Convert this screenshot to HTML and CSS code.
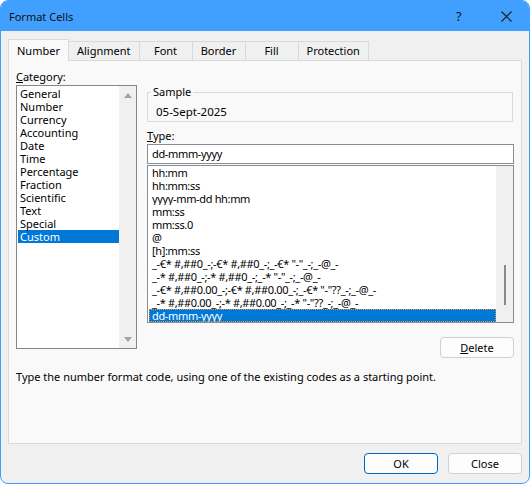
FILE: index.html
```html
<!DOCTYPE html>
<html lang="en">
<head>
<meta charset="utf-8">
<title>Format Cells</title>
<link rel="stylesheet" href="styles.css">
</head>
<body>
<div class="window">
  <div class="titlebar">
    <span class="title">Format Cells</span>
    <span class="help">?</span>
    <span class="close-x">
      <svg width="11" height="11" viewBox="0 0 11 11"><path d="M0.5 0.5L10.5 10.5M10.5 0.5L0.5 10.5" stroke="#1a1a1a" stroke-width="1.1" fill="none"/></svg>
    </span>
  </div>
  <div class="content">
    <div class="tabs">
      <div class="tab active">Number</div>
      <div class="tab">Alignment</div>
      <div class="tab">Font</div>
      <div class="tab">Border</div>
      <div class="tab">Fill</div>
      <div class="tab">Protection</div>
    </div>
    <div class="panel">
      <div class="columns">
        <div class="left">
          <div class="label"><u>C</u>ategory:</div>
          <div class="catlist">
            <div class="items">
              <div class="item">General</div>
              <div class="item">Number</div>
              <div class="item">Currency</div>
              <div class="item">Accounting</div>
              <div class="item">Date</div>
              <div class="item">Time</div>
              <div class="item">Percentage</div>
              <div class="item">Fraction</div>
              <div class="item">Scientific</div>
              <div class="item">Text</div>
              <div class="item">Special</div>
              <div class="item selected">Custom</div>
            </div>
            <div class="vscroll">
              <span class="arrow-up"></span>
              <span class="arrow-down"></span>
            </div>
          </div>
        </div>
        <div class="right">
          <fieldset class="sample">
            <legend>Sample</legend>
            <div class="sample-value">05-Sept-2025</div>
          </fieldset>
          <div class="label type-label"><u>T</u>ype:</div>
          <div class="typebox">dd-mmm-yyyy</div>
          <div class="fmtlist">
            <div class="fmt-items">
              <div class="fitem">hh:mm</div>
              <div class="fitem">hh:mm:ss</div>
              <div class="fitem">yyyy-mm-dd hh:mm</div>
              <div class="fitem">mm:ss</div>
              <div class="fitem">mm:ss.0</div>
              <div class="fitem">@</div>
              <div class="fitem">[h]:mm:ss</div>
              <div class="fitem">_-€* #,##0_-;-€* #,##0_-;_-€* "-"_-;_-@_-</div>
              <div class="fitem">_-* #,##0_-;-* #,##0_-;_-* "-"_-;_-@_-</div>
              <div class="fitem">_-€* #,##0.00_-;-€* #,##0.00_-;_-€* "-"??_-;_-@_-</div>
              <div class="fitem">_-* #,##0.00_-;-* #,##0.00_-;_-* "-"??_-;_-@_-</div>
              <div class="fitem selected focus">dd-mmm-yyyy</div>
            </div>
            <div class="vscroll2"><span class="thumb"></span></div>
          </div>
          <div class="delete-row">
            <button class="btn"><u>D</u>elete</button>
          </div>
        </div>
      </div>
      <p class="desc">Type the number format code, using one of the existing codes as a starting point.</p>
    </div>
    <div class="footer">
      <button class="btn ok">OK</button>
      <button class="btn">Close</button>
    </div>
  </div>
</div>
</body>
</html>
```

FILE: styles.css
```css
* { box-sizing: border-box; }
html, body { margin: 0; padding: 0; background: #ffffff; }
body {
  font-family: "Noto Sans", "Open Sans", "DejaVu Sans", sans-serif;
  font-size: 11px;
  color: #000;
}
.window {
  width: 530px;
  height: 484px;
  border: 1px solid #3f9dff;
  border-radius: 8px;
  background: #f0f0f0;
  overflow: hidden;
  display: flex;
  flex-direction: column;
}
.titlebar {
  height: 30px;
  flex: none;
  background: #41a0ff;
  display: flex;
  align-items: center;
  padding-left: 8px;
}
.title { flex: 1; font-size: 11px; color: #111; }
.help { width: 12px; margin-right: 33px; font-size: 13px; color: #111; }
.close-x { display: flex; margin-right: 17px; }
.content {
  flex: 1;
  display: flex;
  flex-direction: column;
  padding: 8px 7px 8px 7px;
}
.tabs {
  display: flex;
  align-items: flex-end;
  height: 21px;
  flex: none;
}
.tab {
  height: 19px;
  min-width: 54px;
  padding: 0 8px;
  border: 1px solid #dadada;
  border-bottom: none;
  margin-right: -1px;
  text-align: center;
  line-height: 18px;
  background: #f0f0f0;
}
.tab.active {
  height: 22px;
  line-height: 21px;
  background: #f9f9f9;
  margin-bottom: -1px;
  position: relative;
  z-index: 1;
}
.panel {
  height: 384px;
  flex: none;
  border: 1px solid #dadada;
  background: #f9f9f9;
  padding: 8px 7px 0 7px;
}
.columns {
  display: flex;
  gap: 10px;
  align-items: flex-start;
}
.left { width: 121px; flex: none; }
.right { flex: 1; }
.label { line-height: 16px; height: 16px; }
.catlist {
  height: 264px;
  border: 1px solid #828790;
  background: #fff;
  display: flex;
}
.items { flex: 1; padding-top: 1px; padding-left: 1px; }
.item { line-height: 13px; height: 13px; padding-left: 2px; white-space: nowrap; }
.item.selected { background: #0078d7; color: #fff; }
.vscroll {
  width: 17px;
  flex: none;
  background: #f0f0f0;
  display: flex;
  flex-direction: column;
  justify-content: space-between;
  align-items: center;
  padding: 7px 0 6px 0;
}
.arrow-up, .arrow-down {
  width: 0; height: 0;
  border-left: 4.5px solid transparent;
  border-right: 4.5px solid transparent;
}
.arrow-up { border-bottom: 5px solid #a3a3a3; }
.arrow-down { border-top: 5px solid #a3a3a3; }
.sample {
  margin: 16px 0 0 0;
  padding: 0 0 2px 8px;
  border: 1px solid #dadada;
  width: 366px;
  min-width: 0;
}
.sample legend {
  padding: 0 2px;
  margin-left: -5px;
  line-height: 14px;
}
.sample-value { margin-top: 6px; line-height: 14px; font-size: 11.5px; }
.type-label { margin-top: 6px; }
.typebox {
  height: 20px;
  border: 1px solid #8a8d94;
  background: #fff;
  line-height: 18px;
  padding-left: 4px;
  letter-spacing: -0.35px;
}
.fmtlist {
  margin-top: 1px;
  height: 158px;
  border: 1px solid #8a8d94;
  background: #fff;
  display: flex;
}
.fmt-items { flex: 1; min-width: 0; padding-left: 1px; overflow: hidden; }
.fitem {
  line-height: 13px;
  height: 13px;
  padding-left: 3px;
  white-space: nowrap;
  overflow: hidden;
  letter-spacing: -0.35px;
}
.fitem.selected { background: #0078d7; color: #fff; }
.fitem.focus { outline: 1px dotted #e39a3c; outline-offset: -1px; }
.vscroll2 {
  width: 17px;
  flex: none;
  background: #f0f0f0;
  display: flex;
  justify-content: center;
  padding-top: 99px;
}
.thumb { width: 2px; height: 40px; background: #8a8a8a; margin-left: 1px; }
.delete-row { display: flex; justify-content: flex-end; margin-top: 14px; }
.btn {
  width: 74px;
  height: 21px;
  border: 1px solid #d0d0d0;
  border-radius: 4px;
  background: #fdfdfd;
  font-family: inherit;
  font-size: 11px;
  color: #000;
  padding: 0;
  line-height: 18px;
}
.desc { margin: 12px 0 0 0; line-height: 14px; }
.footer {
  display: flex;
  justify-content: flex-end;
  gap: 10px;
  margin-top: 9px;
}
.btn.ok { border-color: #0067c0; }
```
